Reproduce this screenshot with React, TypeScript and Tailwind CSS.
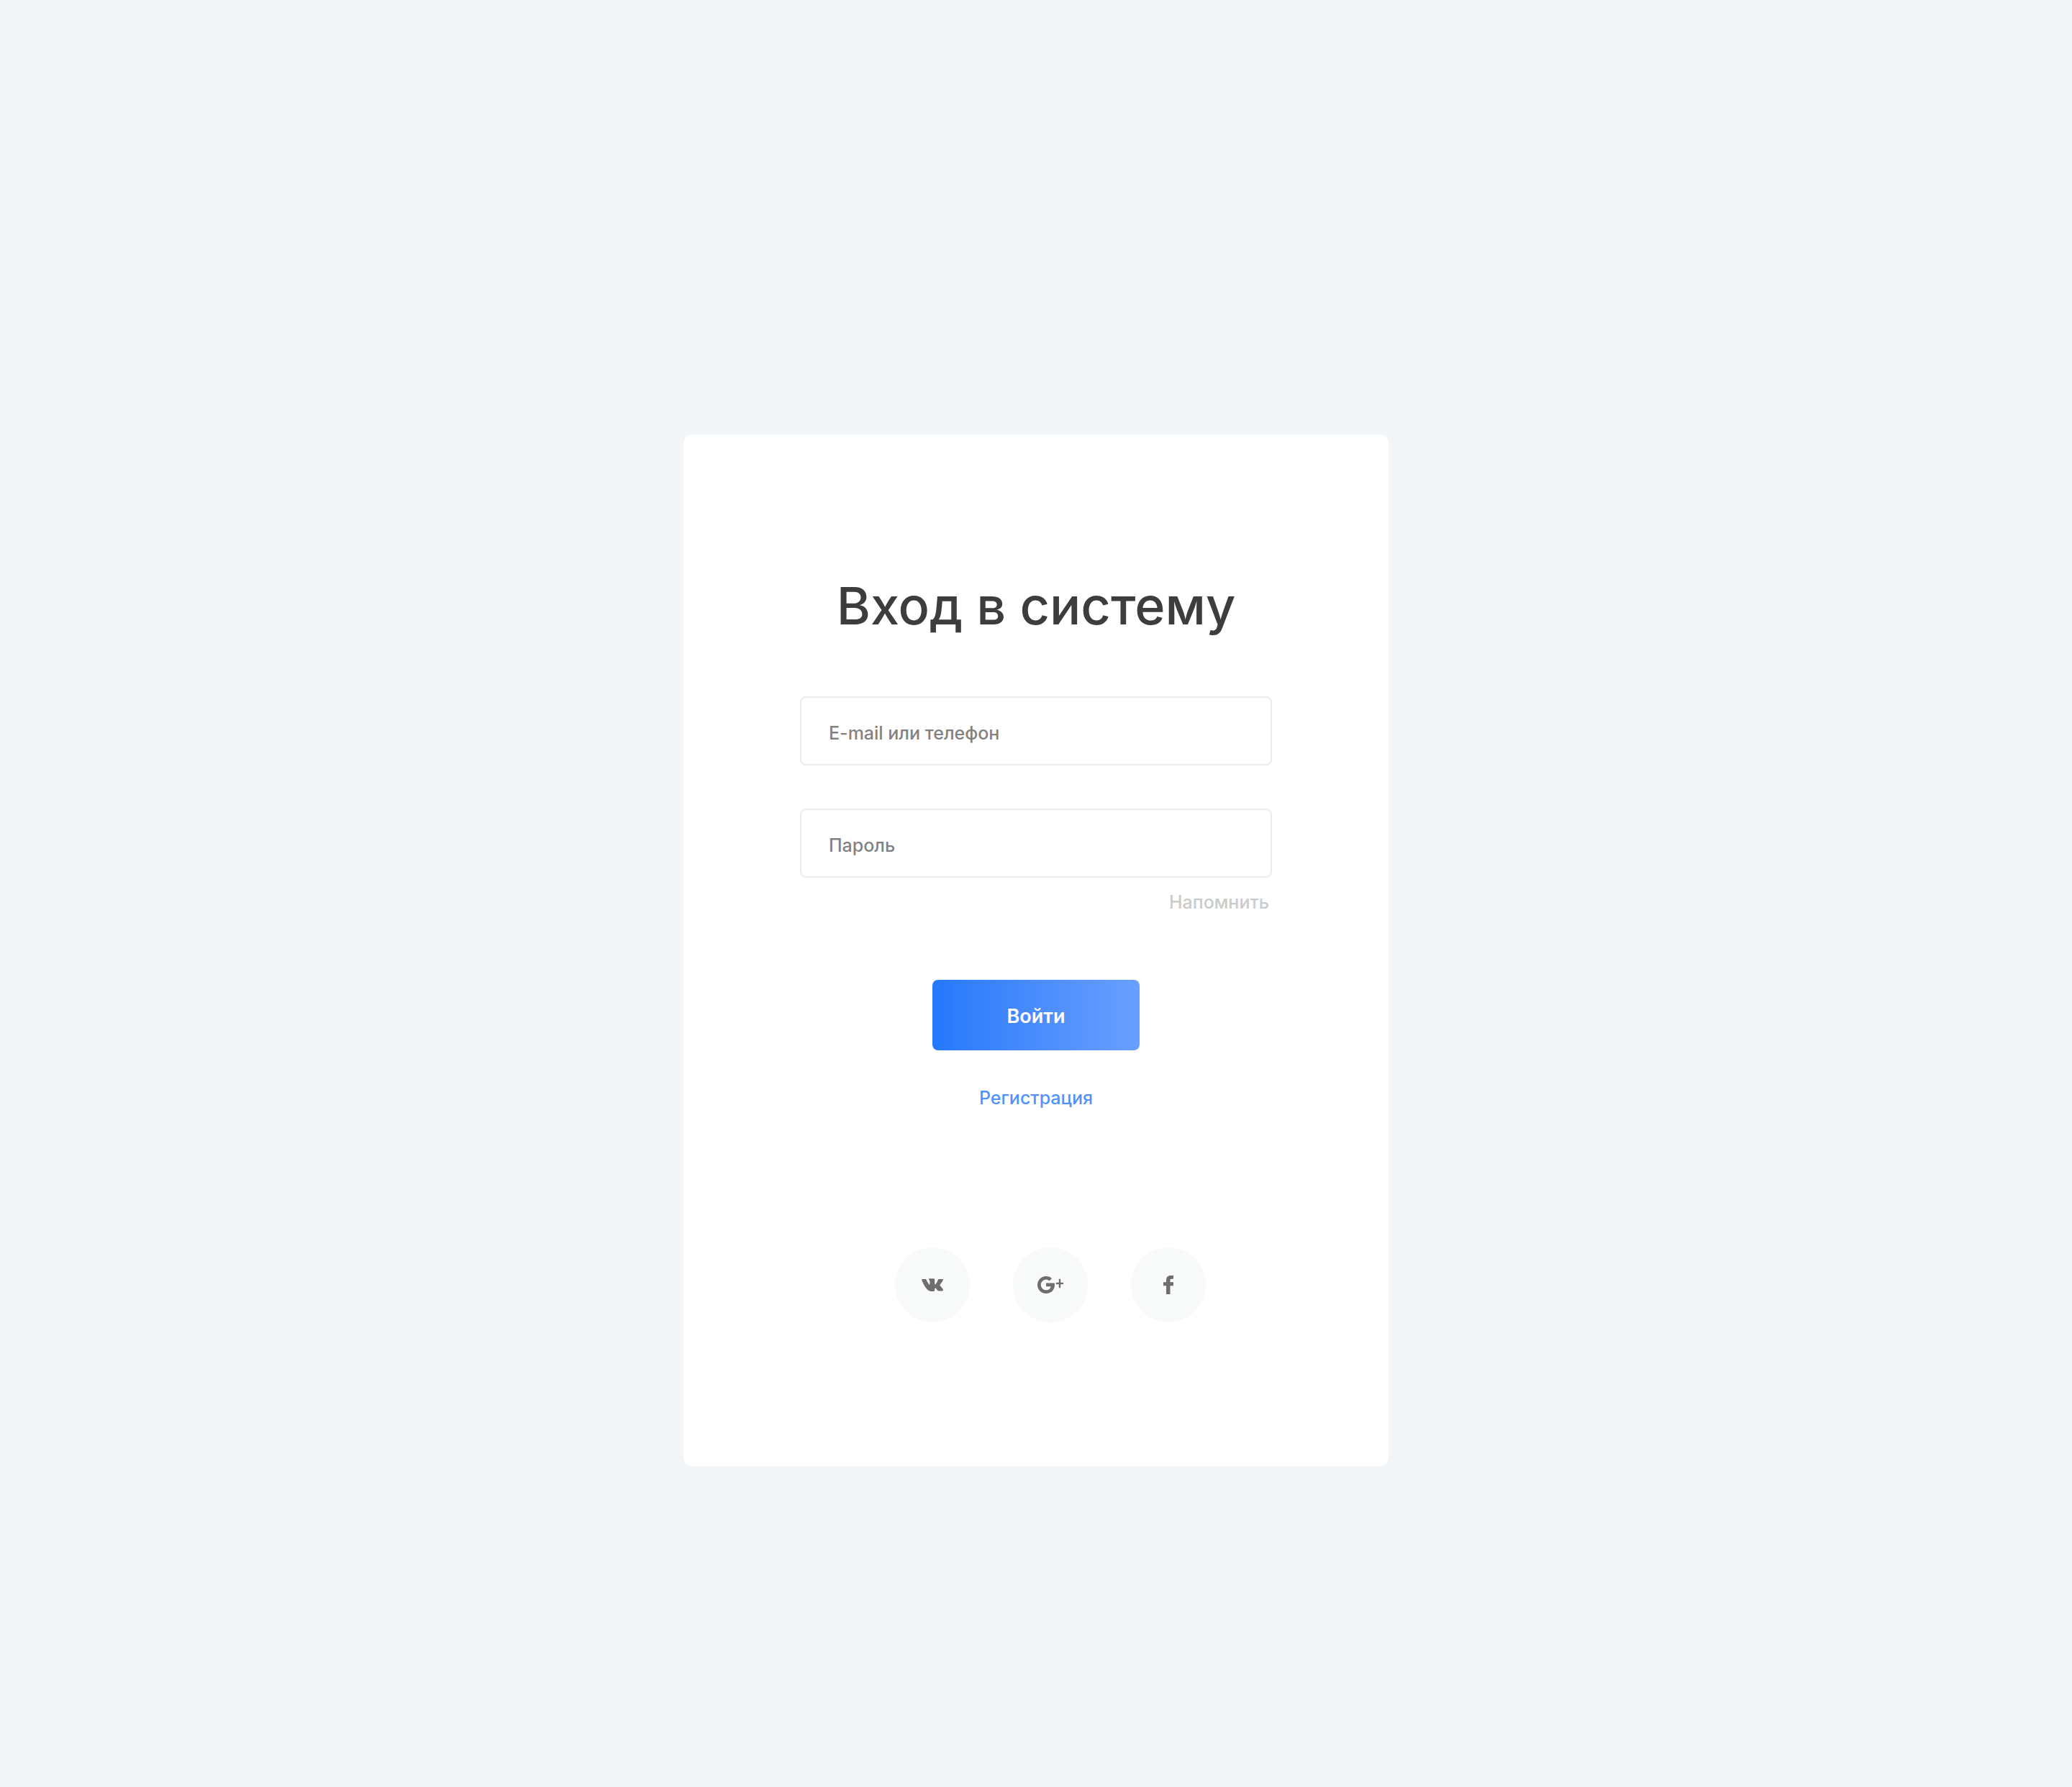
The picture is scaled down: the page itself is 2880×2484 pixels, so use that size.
import React from 'react';

function VkIcon() {
  return (
    <svg viewBox="0 0 30 18" className="h-[18px] w-[30px]" fill="currentColor" aria-hidden="true">
      <path d="M.7 1H5.300c.7 0 1.100.3 1.400 1 1 2.500 2.200 4.500 3.500 6.200.7.900 1.200.7 1.200-.6V4.300c0-1.300-.3-1.800-1.300-2.300C9.600 1 10.600.3 12 .3h4.300c1.300 0 1.900.5 1.900 1.900V7.600c0 1.200.7 1.300 1.400.4 1.200-1.600 2.200-3.500 3-5.600.4-1 .8-1.400 1.800-1.400h4.400c1.200 0 1.500.6 1 1.600-.8 1.800-2.200 3.700-4 5.900-.6.800-.6 1.200.1 1.900 1.900 1.900 3.200 3.500 3.800 4.900.6 1.500 0 2.300-1.500 2.300h-4.100c-.9 0-1.500-.4-2.100-1.100-.8-1-1.600-2.200-2.500-2.700-.8-.5-1.300-.1-1.300.9v1.400c0 1.400-.5 1.900-1.900 1.900H13.700c-2.700 0-5.100-1.300-7.300-4.200C3.900 10.400 1.800 6.700.2 2.200 0 1.500.1 1 .7 1Z" />
    </svg>
  );
}

function GooglePlusIcon() {
  return (
    <svg viewBox="0 0 36 24" className="h-6 w-9" fill="currentColor" aria-hidden="true">
      <path d="M12 9.500h11.800c.1.800.2 1.600.2 2.500C24 19 19.200 24 12 24 5.400 24 0 18.600 0 12S5.400 0 12 0c3.200 0 5.900 1.200 8 3.100l-3.400 3.300c-1.200-1.100-2.700-1.700-4.600-1.700-4 0-7.200 3.300-7.200 7.300s3.200 7.300 7.200 7.300c3.700 0 6-2.100 6.500-5.100H12V9.500Z" />
      <path d="M30 4h2v5h4v2h-4v5h-2v-5h-4V9h4V4Z" stroke="currentColor" strokeWidth="0.4" />
    </svg>
  );
}

function FacebookIcon() {
  return (
    <svg viewBox="0 0 14 26" className="h-[26px] w-[14px]" fill="currentColor" aria-hidden="true">
      <path d="M4 26V14.200H0V9.200h4V6.400C4 2.200 6.400 0 10.200 0H14v4.800h-2.500C9.900 4.800 9.500 5.500 9.500 6.800v2.400H14v5H9.500V26H4Z" />
    </svg>
  );
}

const networks = [
  { name: 'ВКонтакте', Icon: VkIcon },
  { name: 'Google+', Icon: GooglePlusIcon },
  { name: 'Facebook', Icon: FacebookIcon },
];

const fieldClass =
  'h-24 w-full rounded-lg border-2 border-[#ececec] bg-white px-[38px] pt-1.5 text-[25px] font-medium text-[#3d3d3d] outline-none placeholder:text-[#828282] focus:border-[#4a8ffb]';

export default function App() {
  return (
    <div className="min-h-screen bg-[#f2f6f9] px-6 pt-[604px] pb-[446px] font-['Inter',sans-serif] antialiased">
      <main className="mx-auto flex w-full max-w-[980px] flex-col items-center rounded-xl bg-white px-6 pt-[198px] pb-[200px]">
        <h1 className="text-center text-[72px] leading-[80px] font-medium text-[#3d3d3d]">Вход в систему</h1>

        <form className="mt-[86px] flex w-full max-w-[656px] flex-col items-center" onSubmit={(e) => e.preventDefault()}>
          <input type="text" aria-label="E-mail или телефон" placeholder="E-mail или телефон" className={fieldClass} />
          <input type="password" aria-label="Пароль" placeholder="Пароль" className={`mt-[60px] ${fieldClass}`} />
          <a href="#remind" className="mt-[18px] mr-1 self-end text-[25px] leading-8 font-medium text-[#cbcbcb]">
            Напомнить
          </a>
          <button
            type="submit"
            className="mt-[92px] h-[98px] w-72 cursor-pointer rounded-lg bg-linear-to-r from-[#2378fb] to-[#699fff] pt-1 text-[27px] font-semibold text-white"
          >
            Войти
          </button>
          <a href="#register" className="mt-[50px] text-[25px] leading-8 font-medium text-[#5093fb]">
            Регистрация
          </a>
        </form>

        <nav aria-label="Социальные сети" className="mt-48 ml-10 flex gap-[60px]">
          {networks.map(({ name, Icon }) => (
            <a
              key={name}
              href="#social"
              aria-label={name}
              className="flex size-[104px] items-center justify-center rounded-full bg-[#f8faf9] text-[#6e6e6e]"
            >
              <Icon />
            </a>
          ))}
        </nav>
      </main>
    </div>
  );
}
